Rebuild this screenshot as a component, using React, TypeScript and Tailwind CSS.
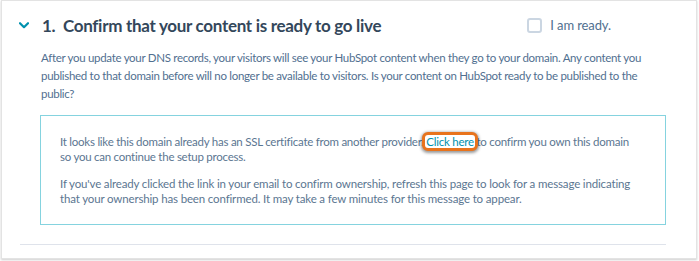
import React, { useState } from 'react';

const App: React.FC = () => {
  const [ready, setReady] = useState(false);

  return (
    <div className="w-[699px] h-[261px] bg-white" style={{ fontFamily: 'Lato, "Open Sans", sans-serif' }}>
      <div className="ml-[1px] w-[696px] h-[259px] border border-[#e3e3e3] shadow-[0_1px_2px_rgba(0,0,0,0.2)] bg-white">
        <div className="pl-[17px] pr-[30px]">
          <div className="flex items-center h-[48px] pt-[1px]">
            <svg width="10" height="7" viewBox="0 0 10 7" className="mr-[13px]">
              <path d="M1 1.2 L5 5.2 L9 1.2" fill="none" stroke="#0091ae" strokeWidth="2.2" strokeLinecap="round" strokeLinejoin="round" />
            </svg>
            <h2 className="text-[17px] font-bold text-[#33475b] tracking-[-0.3px]">1.&nbsp; Confirm that your content is ready to go live</h2>
            <label className="ml-auto mr-[55px] flex items-center gap-[8px] cursor-pointer">
              <span
                onClick={() => setReady(!ready)}
                className="w-[15px] h-[15px] rounded-[3px] border-2 border-[#cbd6e2] bg-white"
              />
              <span className="text-[13px] text-[#516f90] tracking-[-0.1px]">I am ready.</span>
            </label>
          </div>
          <div className="pl-[22px]">
            <p className="text-[11.5px] leading-[18px] tracking-[-0.3px] text-[#516f90]">
              After you update your DNS records, your visitors will see your HubSpot content when they go to your domain. Any content you published to that domain before will no longer be available to visitors. Is your content on HubSpot ready to be published to the public?
            </p>
            <div className="mt-[12px] ml-[-1px] border border-[#85d3df] px-[19px] pt-[18px] pb-[18px] text-[11.5px] leading-[15px] text-[#5b7691]">
              <p className="pr-[10px] tracking-[-0.25px]">
                It looks like this domain already has an SSL certificate from another provider.{' '}
                <span className="relative inline-block">
                  <span className="absolute left-[-4px] right-[-4px] top-[-2px] bottom-[-2px] rounded-[6px] border-[3px] border-[#e8731c] bg-white shadow-[0_1px_3px_1px_rgba(0,0,0,0.4)]" />
                  <a href="#" className="relative text-[#0091ae]">Click here</a>
                </span>{' '}
                to confirm you own this domain so you can continue the setup process.
              </p>
              <p className="mt-[12px] pr-[10px] tracking-[-0.15px]">
                If you've already clicked the link in your email to confirm ownership, refresh this page to look for a message indicating that your ownership has been confirmed. It may take a few minutes for this message to appear.
              </p>
            </div>
          </div>
          <div className="mt-[19px] h-[1px] bg-[#dfe3eb] ml-[1px]" />
        </div>
      </div>
    </div>
  );
};

export default App;
